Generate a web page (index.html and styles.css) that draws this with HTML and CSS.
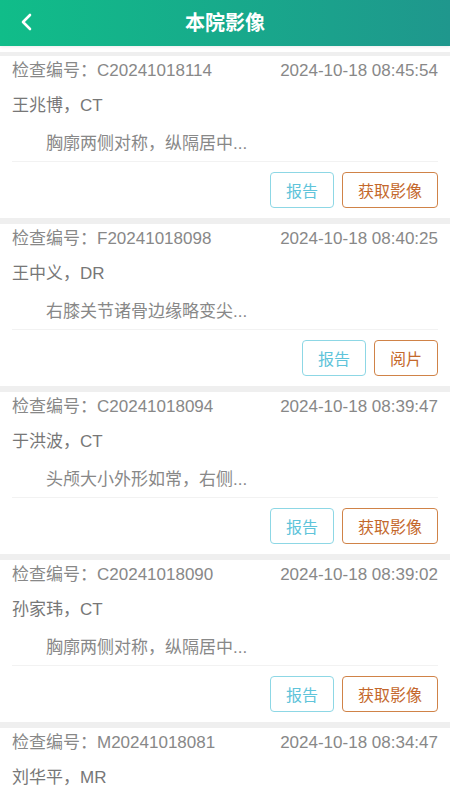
FILE: index.html
```html
<!DOCTYPE html>
<html lang="zh-CN">
<head>
    <meta charset="UTF-8">
    <meta name="viewport" content="width=device-width, initial-scale=1.0">
    <title>本院影像</title>
    <link rel="stylesheet" href="styles.css">
</head>
<body>
    <div class="top-bar">
        <a class="back-btn" href="#">
            <svg width="14" height="18" viewBox="0 0 14 18">
                <polyline points="11,2 4,9 11,16" fill="none" stroke="#fff" stroke-width="2.6" stroke-linecap="round" stroke-linejoin="round"/>
            </svg>
        </a>
        <h1>本院影像</h1>
    </div>

    <div class="exam-list">
        <div class="exam-card">
            <div class="exam-head">
                <span>检查编号：C20241018114</span>
                <span>2024-10-18 08:45:54</span>
            </div>
            <div class="exam-patient">王兆博，CT</div>
            <div class="exam-desc">胸廓两侧对称，纵隔居中...</div>
            <div class="exam-actions">
                <button class="btn-report">报告</button>
                <button class="btn-image">获取影像</button>
            </div>
        </div>

        <div class="exam-card">
            <div class="exam-head">
                <span>检查编号：F20241018098</span>
                <span>2024-10-18 08:40:25</span>
            </div>
            <div class="exam-patient">王中义，DR</div>
            <div class="exam-desc">右膝关节诸骨边缘略变尖...</div>
            <div class="exam-actions">
                <button class="btn-report">报告</button>
                <button class="btn-image">阅片</button>
            </div>
        </div>

        <div class="exam-card">
            <div class="exam-head">
                <span>检查编号：C20241018094</span>
                <span>2024-10-18 08:39:47</span>
            </div>
            <div class="exam-patient">于洪波，CT</div>
            <div class="exam-desc">头颅大小外形如常，右侧...</div>
            <div class="exam-actions">
                <button class="btn-report">报告</button>
                <button class="btn-image">获取影像</button>
            </div>
        </div>

        <div class="exam-card">
            <div class="exam-head">
                <span>检查编号：C20241018090</span>
                <span>2024-10-18 08:39:02</span>
            </div>
            <div class="exam-patient">孙家玮，CT</div>
            <div class="exam-desc">胸廓两侧对称，纵隔居中...</div>
            <div class="exam-actions">
                <button class="btn-report">报告</button>
                <button class="btn-image">获取影像</button>
            </div>
        </div>

        <div class="exam-card">
            <div class="exam-head">
                <span>检查编号：M20241018081</span>
                <span>2024-10-18 08:34:47</span>
            </div>
            <div class="exam-patient">刘华平，MR</div>
        </div>
    </div>
</body>
</html>
```

FILE: styles.css
```css
body {
    margin: 0;
    font-family: "Liberation Sans", "Noto Sans CJK SC", sans-serif;
    background-color: #fff;
    overflow: hidden;
}

.top-bar {
    height: 46px;
    display: flex;
    align-items: center;
    justify-content: center;
    position: relative;
    background: linear-gradient(to right, #10bd89, #1f978d);
    box-shadow: 0 1px 3px rgba(0, 0, 0, 0.08);
}

    .top-bar h1 {
        margin: 0;
        color: #fff;
        font-size: 20px;
        font-weight: bold;
        line-height: 46px;
    }

.back-btn {
    position: absolute;
    left: 19px;
    top: 13px;
    display: flex;
}

.exam-list {
    padding-top: 6px;
}

.exam-card {
    border-top: 6px solid #efefef;
    padding: 0 12px 10px;
}

    .exam-card:first-child {
        border-top-width: 4px;
    }

.exam-head {
    display: flex;
    justify-content: space-between;
    font-size: 17px;
    line-height: 30px;
    color: #888;
}

.exam-patient {
    margin-top: 4px;
    font-size: 17px;
    line-height: 31px;
    color: #777;
}

.exam-desc {
    margin-top: 8px;
    padding-bottom: 2px;
    border-bottom: 1px solid #f2f2f2;
    font-size: 17px;
    line-height: 30px;
    color: #888;
    text-indent: 2em;
}

.exam-actions {
    margin-top: 10px;
    display: flex;
    justify-content: flex-end;
    gap: 8px;
}

    .exam-actions button {
        height: 36px;
        padding: 0 15px;
        background-color: #fff;
        border-radius: 4px;
        font-family: inherit;
        font-size: 16px;
        cursor: pointer;
    }

    .exam-actions .btn-report {
        border: 1px solid #8dd7e5;
        color: #5fc4da;
    }

    .exam-actions .btn-image {
        border: 1px solid #d08348;
        color: #c4682c;
    }
```
